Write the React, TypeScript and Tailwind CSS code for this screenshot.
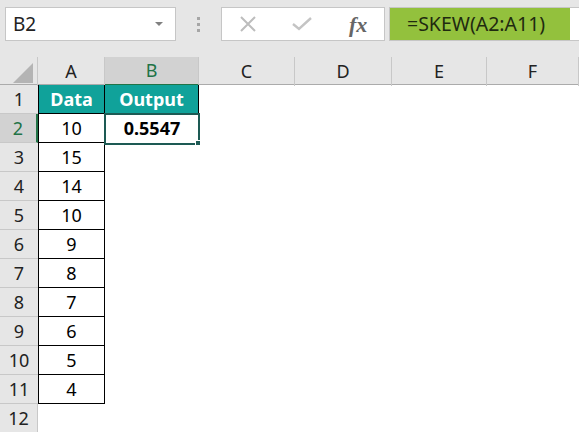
import React from "react";

const font = { fontFamily: '"Noto Sans", "Open Sans", sans-serif' };

const data = [10, 15, 14, 10, 9, 8, 7, 6, 5, 4];
const cols = ["A", "B", "C", "D", "E", "F"];

function Toolbar() {
  return (
    <div className="flex h-[57px] items-start bg-[#e6e6e6] pt-[7px]">
      <div className="ml-[5px] flex h-[34px] w-[171px] items-center justify-between border border-[#c6c6c6] bg-white pl-[7px] pr-[12px] text-[19px] text-[#222]">
        <span>B2</span>
        <span className="h-0 w-0 border-x-[4px] border-t-[4px] border-x-transparent border-t-[#808080]" />
      </div>
      <div className="flex h-[34px] w-[45px] flex-col items-center justify-center gap-[3px]">
        <span className="h-[3px] w-[3px] bg-[#a6a6a6]" />
        <span className="h-[3px] w-[3px] bg-[#a6a6a6]" />
        <span className="h-[3px] w-[3px] bg-[#a6a6a6]" />
      </div>
      <div className="flex h-[34px] w-[164px] items-center border border-[#c6c6c6] bg-white">
        <svg width="18" height="18" viewBox="0 0 18 18" className="ml-[17px]">
          <path d="M2 2 L16 16 M16 2 L2 16" stroke="#bdbdbd" strokeWidth="2" />
        </svg>
        <svg width="20" height="14" viewBox="0 0 20 14" className="ml-[35px]">
          <path d="M1 7 L7 12 L19 1" stroke="#c4c4c4" strokeWidth="2.4" fill="none" />
        </svg>
        <span
          className="ml-[37px] text-[22px] font-semibold italic text-[#666]"
          style={{ fontFamily: '"Liberation Serif", serif' }}
        >
          fx
        </span>
      </div>
      <div className="ml-[4px] flex h-[34px] flex-1 border-y border-l border-[#c6c6c6] bg-white">
        <div className="flex w-[180px] items-center bg-[#93c13d] pl-[17px] text-[19.5px] text-[#1f2a10]">
          =SKEW(A2:A11)
        </div>
      </div>
    </div>
  );
}

function ColumnHeaders() {
  return (
    <div className="grid h-[28px] grid-cols-[38px_67px_94px_96px_97px_95px_1fr] border-b border-[#ababab] bg-[#e6e6e6] text-[18px] text-[#222]">
      <div className="relative border-r border-[#c8c8c8]">
        <span className="absolute bottom-[3px] right-[4px] h-0 w-0 border-b-[20px] border-l-[20px] border-b-[#b4b4b4] border-l-transparent" />
      </div>
      {cols.map((c) => (
        <div
          key={c}
          className={
            c === "B"
              ? "flex items-center justify-center border-b-2 border-r border-b-[#217346] border-r-[#c8c8c8] bg-[#d2d2d2] text-[#217346]"
              : "flex items-center justify-center border-r border-[#c8c8c8]"
          }
        >
          {c}
        </div>
      ))}
    </div>
  );
}

function Row({ n }: { n: number }) {
  const inTable = n <= 11;
  const selected = n === 2;
  return (
    <div className="grid h-[29px] grid-cols-[38px_67px_94px_96px_97px_95px_1fr] text-[18px]">
      <div
        className={
          selected
            ? "flex items-center justify-center border-b border-r-2 border-b-[#c8c8c8] border-r-[#217346] bg-[#d2d2d2] text-[#217346]"
            : inTable
              ? "flex items-center justify-center border-b border-[#c8c8c8] bg-[#e6e6e6] text-[#222]"
              : "flex items-center justify-center border-b border-r border-[#c8c8c8] bg-[#e6e6e6] text-[#222]"
        }
      >
        {n}
      </div>
      {inTable ? (
        <div
          className={
            n === 1
              ? "flex items-center justify-center border-x border-b border-black bg-[#10a29a] font-bold text-white"
              : "flex items-center justify-center border-x border-b border-black bg-white text-black"
          }
        >
          {n === 1 ? "Data" : data[n - 2]}
        </div>
      ) : (
        <div />
      )}
      {n === 1 ? (
        <div className="flex items-center justify-center border-r border-black bg-[#10a29a] font-bold text-white">
          Output
        </div>
      ) : selected ? (
        <div className="relative flex items-center justify-center font-bold text-black">
          0.5547
          <span className="absolute -inset-x-px -bottom-[2px] -top-px border-2 border-[#1d5a54]" />
          <span className="absolute -bottom-[3px] -right-[2px] h-[6px] w-[6px] border border-white bg-[#1d5a54]" />
        </div>
      ) : (
        <div />
      )}
      <div />
      <div />
      <div />
      <div />
    </div>
  );
}

export default function App() {
  const rows = Array.from({ length: 12 }, (_, i) => i + 1);
  return (
    <div className="h-[432px] w-[579px] overflow-hidden bg-white" style={font}>
      <Toolbar />
      <ColumnHeaders />
      {rows.map((n) => (
        <Row key={n} n={n} />
      ))}
    </div>
  );
}
